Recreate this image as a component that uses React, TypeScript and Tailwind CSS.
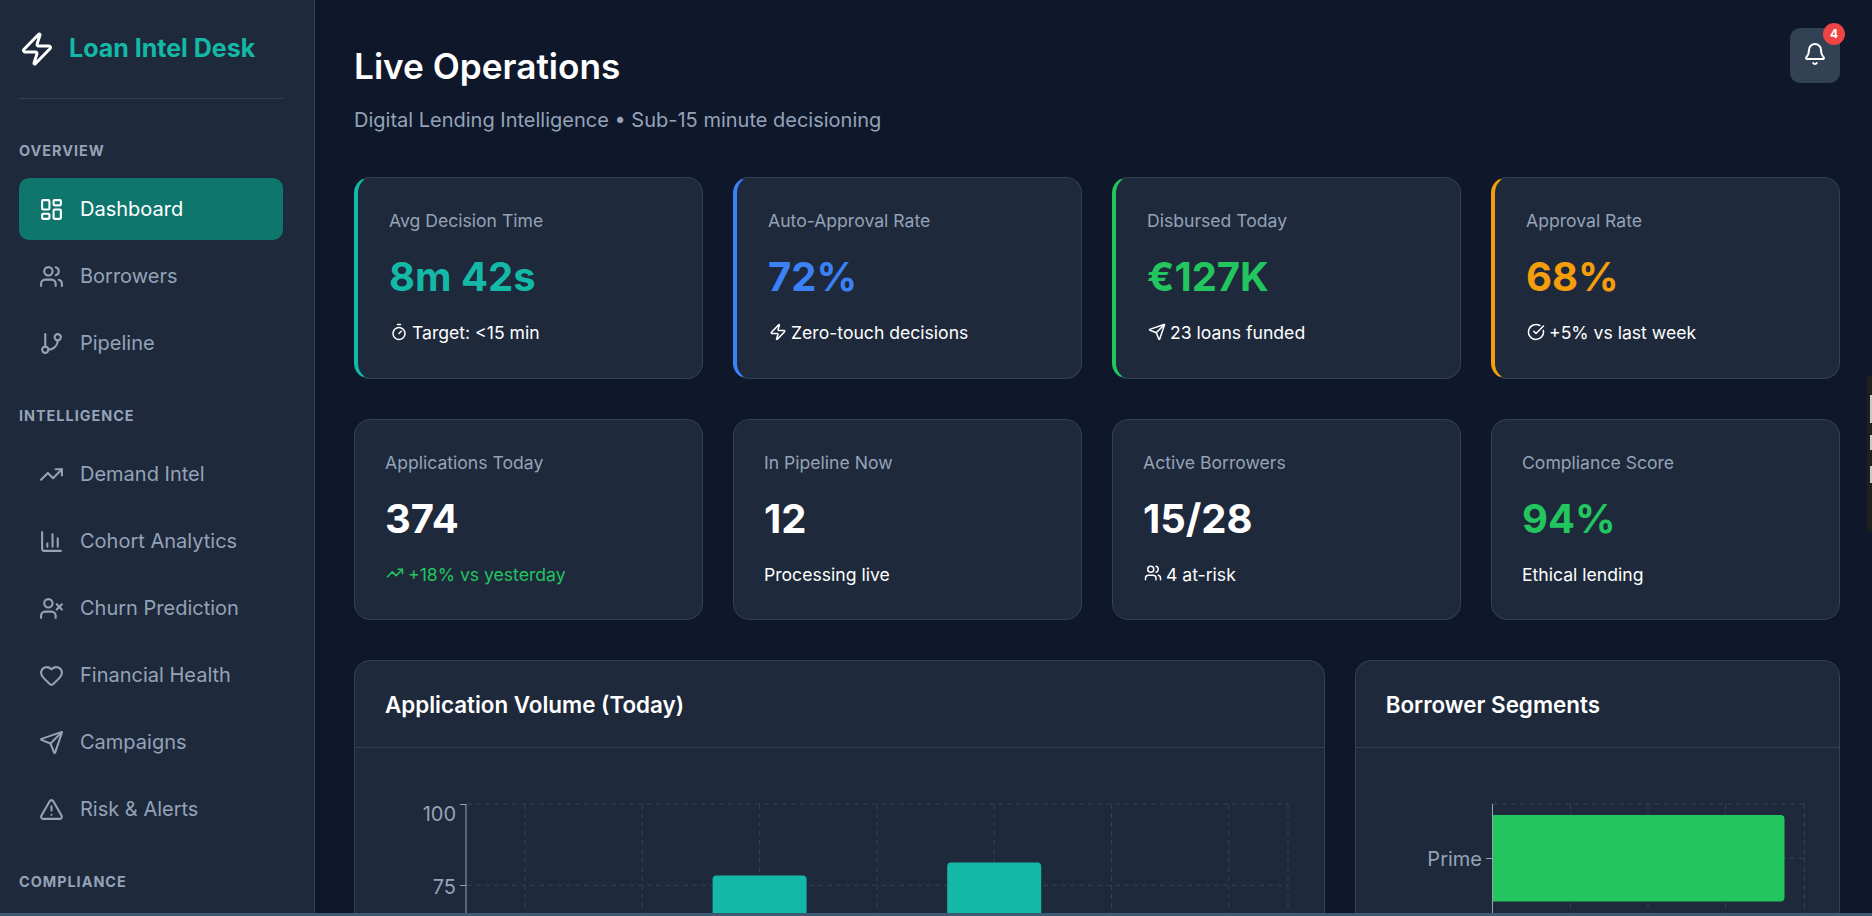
import React from 'react';
import {
  Zap,
  LayoutDashboard,
  Users,
  GitBranch,
  TrendingUp,
  BarChart3,
  UserX,
  Heart,
  Send,
  AlertTriangle,
  Bell,
  Timer,
  CircleCheckBig,
} from 'lucide-react';

type NavItem = { label: string; icon: React.ElementType; active?: boolean };

const navOverview: NavItem[] = [
  { label: 'Dashboard', icon: LayoutDashboard, active: true },
  { label: 'Borrowers', icon: Users },
  { label: 'Pipeline', icon: GitBranch },
];

const navIntel: NavItem[] = [
  { label: 'Demand Intel', icon: TrendingUp },
  { label: 'Cohort Analytics', icon: BarChart3 },
  { label: 'Churn Prediction', icon: UserX },
  { label: 'Financial Health', icon: Heart },
  { label: 'Campaigns', icon: Send },
  { label: 'Risk & Alerts', icon: AlertTriangle },
];

function NavRow({ item }: { item: NavItem }) {
  const Icon = item.icon;
  return (
    <div
      className={`flex items-center gap-4 h-[62px] pl-5 rounded-[10px] text-[20px] mb-[5px] ${
        item.active ? 'bg-[#0f766e] text-white' : 'text-[#94a3b8]'
      }`}
    >
      <Icon size={25} strokeWidth={2} />
      <span>{item.label}</span>
    </div>
  );
}

type Stat = {
  label: string;
  value: string;
  sub: string;
  icon?: React.ElementType;
  border?: string;
  text?: string;
  subText?: string;
};

const topCards: Stat[] = [
  { label: 'Avg Decision Time', value: '8m 42s', sub: 'Target: <15 min', icon: Timer, border: 'border-l-4 border-l-[#14b8a6] pl-[31px]', text: 'text-[#14b8a6]' },
  { label: 'Auto-Approval Rate', value: '72%', sub: 'Zero-touch decisions', icon: Zap, border: 'border-l-4 border-l-[#3b82f6] pl-[31px]', text: 'text-[#3b82f6]' },
  { label: 'Disbursed Today', value: '€127K', sub: '23 loans funded', icon: Send, border: 'border-l-4 border-l-[#22c55e] pl-[31px]', text: 'text-[#22c55e]' },
  { label: 'Approval Rate', value: '68%', sub: '+5% vs last week', icon: CircleCheckBig, border: 'border-l-4 border-l-[#f59e0b] pl-[31px]', text: 'text-[#f59e0b]' },
];

const bottomCards: Stat[] = [
  { label: 'Applications Today', value: '374', sub: '+18% vs yesterday', icon: TrendingUp, border: 'pl-[30px]', subText: 'text-[#22c55e]' },
  { label: 'In Pipeline Now', value: '12', sub: 'Processing live', border: 'pl-[30px]' },
  { label: 'Active Borrowers', value: '15/28', sub: '4 at-risk', icon: Users, border: 'pl-[30px]' },
  { label: 'Compliance Score', value: '94%', sub: 'Ethical lending', border: 'pl-[30px]', text: 'text-[#22c55e]' },
];

function StatCard({ stat }: { stat: Stat }) {
  const Icon = stat.icon;
  return (
    <div className={`rounded-[16px] bg-[#1e293b] border border-[#334155] ${stat.border ?? ''} pr-[30px] pt-[30.4px] pb-[30.8px]`}>
      <div className="text-[17.6px] text-[#94a3b8]">{stat.label}</div>
      <div className={`text-[40px] font-bold mt-[12.8px] ${stat.text ?? 'text-white'}`}>{stat.value}</div>
      <div className={`flex items-center gap-[3px] mt-[13px] text-[17.6px] ${stat.subText ?? 'text-white'}`}>
        {Icon && <Icon size={20} strokeWidth={2} className="-translate-y-[2px] scale-[0.9]" />}
        {stat.sub}
      </div>
    </div>
  );
}

const hours = [20, 45, 78, 62, 82, 55, 30];

function VolumeChart() {
  const xs = [525, 642.3, 759.6, 877, 994.2, 1111.5, 1228.8];
  const scaleY = (v: number) => 804 + (100 - v) * 3.252;
  return (
    <svg width="969" height="170" viewBox="355 748 969 170" className="block">
      <g stroke="#334155" strokeDasharray="5 4" fill="none">
        <line x1="467" y1="804" x2="1288" y2="804" />
        <line x1="467" y1="885.3" x2="1288" y2="885.3" />
        {xs.map((x) => (
          <line key={x} x1={x} y1="804" x2={x} y2="1000" />
        ))}
        <line x1="1288" y1="804" x2="1288" y2="1000" />
      </g>
      {hours.map((v, i) => (
        <path
          key={i}
          fill="#14b8a6"
          d={`M${xs[i] - 47} 1000V${scaleY(v) + 4}q0-4 4-4h86q4 0 4 4V1000z`}
        />
      ))}
      <g stroke="#94a3b8" fill="none">
        <line x1="466" y1="804" x2="466" y2="1000" />
        <line x1="460" y1="804.5" x2="466" y2="804.5" />
        <line x1="460" y1="885.5" x2="466" y2="885.5" />
      </g>
      <g fill="#94a3b8" fontSize="20" textAnchor="end">
        <text x="456" y="821">100</text>
        <text x="456" y="894">75</text>
      </g>
    </svg>
  );
}

function SegmentChart() {
  return (
    <svg width="484" height="170" viewBox="1356 748 484 170" className="block">
      <g stroke="#334155" strokeDasharray="5 4" fill="none">
        <line x1="1493" y1="804" x2="1804.5" y2="804" />
        <line x1="1493" y1="858" x2="1804.5" y2="858" />
        <line x1="1570.5" y1="804" x2="1570.5" y2="1000" />
        <line x1="1648" y1="804" x2="1648" y2="1000" />
        <line x1="1725.5" y1="804" x2="1725.5" y2="1000" />
        <line x1="1804.5" y1="804" x2="1804.5" y2="1000" />
      </g>
      <path fill="#22c55e" d="M1493 815H1780.5q4 0 4 4V897.5q0 4-4 4H1493z" />
      <g stroke="#94a3b8" fill="none">
        <line x1="1492.5" y1="804" x2="1492.5" y2="1000" />
        <line x1="1486" y1="858.5" x2="1492.5" y2="858.5" />
      </g>
      <text x="1482" y="866" fill="#94a3b8" fontSize="20" textAnchor="end">Prime</text>
    </svg>
  );
}

function Panel({ title, children }: { title: string; children: React.ReactNode }) {
  return (
    <div className="rounded-[16px] bg-[#1e293b] border border-[#334155] overflow-hidden h-[400px]">
      <div className="h-[87px] flex items-center px-[30px] border-b border-[#334155]">
        <h2 className="text-[22.4px] font-semibold text-white">{title}</h2>
      </div>
      {children}
    </div>
  );
}

export default function App() {
  return (
    <div className="relative flex flex-col h-[916px] overflow-hidden bg-[#0f172a] font-['Inter',sans-serif]">
      <div className="flex flex-1 min-h-0">
        <aside className="w-[315px] shrink-0 bg-[#1e293b] border-r border-[#334155] pl-[19px] pr-[31px] overflow-hidden">
          <div className="flex items-center gap-[14px] h-[99px] border-b border-[#334155]">
            <Zap size={36} strokeWidth={2} className="text-white" />
            <span className="text-[25px] font-bold text-[#14b8a6]">Loan Intel Desk</span>
          </div>
          <h3 className="mt-[40.5px] mb-[17px] text-[14.4px] font-bold tracking-[1px] text-[#94a3b8]">OVERVIEW</h3>
          {navOverview.map((item) => (
            <NavRow key={item.label} item={item} />
          ))}
          <h3 className="mt-[31px] mb-[16.5px] text-[14.4px] font-bold tracking-[1px] text-[#94a3b8]">INTELLIGENCE</h3>
          {navIntel.map((item) => (
            <NavRow key={item.label} item={item} />
          ))}
          <h3 className="mt-[31px] text-[14.4px] font-bold tracking-[1px] text-[#94a3b8]">COMPLIANCE</h3>
        </aside>

        <main className="flex-1 min-w-0 pl-[39px] pr-8 pt-7 overflow-hidden">
          <div className="flex items-start justify-between mb-[41.6px]">
            <div className="pt-[12px]">
              <h1 className="text-[35.2px] font-semibold text-white">Live Operations</h1>
              <p className="text-[20px] text-[#94a3b8] mt-[12.4px]">Digital Lending Intelligence • Sub-15 minute decisioning</p>
            </div>
            <button className="relative w-[50px] h-[55px] rounded-[10px] bg-[#334155] flex items-center justify-center text-white">
              <Bell size={24} strokeWidth={2} className="-translate-y-[2px]" />
              <span className="absolute -top-[5px] -right-[5px] w-[22px] h-[22px] rounded-full bg-[#ef4444] text-[12px] font-bold flex items-center justify-center">4</span>
            </button>
          </div>

          <div className="grid grid-cols-4 gap-x-[30px] gap-y-10">
            {topCards.map((c) => (
              <StatCard key={c.label} stat={c} />
            ))}
            {bottomCards.map((c) => (
              <StatCard key={c.label} stat={c} />
            ))}
          </div>

          <div className="grid grid-cols-[2fr_1fr] gap-[30px] mt-10">
            <Panel title="Application Volume (Today)">
              <VolumeChart />
            </Panel>
            <Panel title="Borrower Segments">
              <SegmentChart />
            </Panel>
          </div>
        </main>
      </div>
      <div className="h-[3px] shrink-0 bg-[#3d5a73]" />

      {/* bit of a floating widget poking in from the right edge */}
      <div className="absolute right-0 top-[375px] w-[5px] h-[157px] rounded-l-[4px] bg-[#1f1f1f] flex flex-col items-end pt-[20px]">
        <div className="w-[2px] h-[28px] bg-[#c8c8c8]" />
        <div className="w-[2px] h-[15px] mt-[12px] bg-[#c8c8c8]" />
        <div className="w-[2px] h-[17px] mt-[16px] bg-[#c8c8c8]" />
      </div>
    </div>
  );
}
